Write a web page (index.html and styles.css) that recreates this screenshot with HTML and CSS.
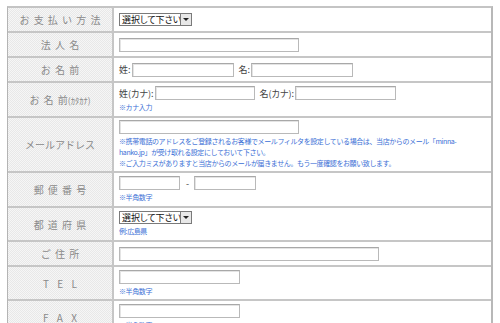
FILE: index.html
```html
<!DOCTYPE html>
<html lang="ja">
<head>
<meta charset="utf-8">
<link rel="stylesheet" href="styles.css">
</head>
<body>
<div class="form">
  <div class="row h25">
    <div class="label">お 支 払 い 方 法</div>
    <div class="value"><span class="select"><span class="sel-text">選択して下さい</span><span class="sel-btn"><span class="tri"></span></span></span></div>
  </div>
  <div class="row h25">
    <div class="label">法 人 名</div>
    <div class="value"><span class="input w180"></span></div>
  </div>
  <div class="row h25">
    <div class="label">お 名 前</div>
    <div class="value"><div class="line"><span class="txt">姓:</span><span class="input w102"></span><span class="txt gap">名:</span><span class="input w102"></span></div></div>
  </div>
  <div class="row h35">
    <div class="label">お 名 前<span class="small">(ｶﾀｶﾅ)</span></div>
    <div class="value"><div class="line"><span class="txt">姓(カナ):</span><span class="input w100"></span><span class="txt gap">名(カナ):</span><span class="input w101"></span></div><div class="note">※カナ入力</div></div>
  </div>
  <div class="row h55">
    <div class="label">メールアドレス</div>
    <div class="value"><span class="input w180"></span><div class="note">※携帯電話のアドレスをご登録されるお客様でメールフィルタを設定している場合は、当店からのメール「minna-<br>hanko.jp」が受け取れる設定にしておいて下さい。<br>※ご入力ミスがありますと当店からのメールが届きません。もう一度確認をお願い致します。</div></div>
  </div>
  <div class="row h35">
    <div class="label">郵 便 番 号</div>
    <div class="value"><div class="line"><span class="input w61"></span><span class="txt dash">-</span><span class="input w62"></span></div><div class="note">※半角数字</div></div>
  </div>
  <div class="row h34">
    <div class="label">都 道 府 県</div>
    <div class="value"><span class="select"><span class="sel-text">選択して下さい</span><span class="sel-btn"><span class="tri"></span></span></span><div class="note">例:広島県</div></div>
  </div>
  <div class="row h25">
    <div class="label">ご 住 所</div>
    <div class="value"><span class="input w260"></span></div>
  </div>
  <div class="row h34">
    <div class="label latin">T E L</div>
    <div class="value"><span class="input w121"></span><div class="note">※半角数字</div></div>
  </div>
  <div class="row h34">
    <div class="label latin">F A X</div>
    <div class="value"><span class="input w121"></span><div class="note">※半角数字</div></div>
  </div>
</div>
</body>
</html>
```
FILE: styles.css
```css
html, body {
  margin: 0;
  padding: 0;
  background: #ffffff;
}
body {
  padding: 6px 0 0 7px;
  font-family: "Noto Sans CJK JP", "Liberation Sans", sans-serif;
  color: #444;
  overflow: hidden;
}
.form {
  width: 486px;
  border-top: 2px solid #c4c4c4;
  border-left: 1px solid #b4b4b4;
  border-right: 2px solid #b8b8b8;
  box-sizing: border-box;
}
.row {
  display: grid;
  grid-template-columns: 106px 1fr;
  border-bottom: 2px solid #c6c6c6;
  box-sizing: border-box;
}
.h25 { height: 25px; }
.h34 { height: 34px; }
.h35 { height: 35px; }
.h55 { height: 55px; }
.label {
  display: flex;
  align-items: center;
  justify-content: center;
  border-right: 2px solid #c6c6c6;
  background-color: #f0f0f0;
  background-image: repeating-conic-gradient(#e8e8e8 0 25%, #f6f6f6 0 50%);
  background-size: 2px 2px;
  color: #8a8a8a;
  font-size: 10px;
  white-space: pre;
  letter-spacing: 0;
  word-spacing: 2px;
}
.label.latin {
  word-spacing: 6px;
  font-size: 10px;
}
.small {
  font-size: 8.5px;
  letter-spacing: 0;
  word-spacing: 0;
}
.value {
  display: flex;
  flex-direction: column;
  justify-content: center;
  align-items: flex-start;
  padding-left: 5px;
  background: #fff;
  font-size: 9px;
  color: #444;
}
.line {
  display: flex;
  align-items: center;
}
.txt {
  font-size: 9px;
  margin-right: 1px;
  font-feature-settings: "palt";
}
.gap { margin-left: 5px; }
.dash { margin: 0 5px 0 6px; }
.input {
  display: block;
  height: 14px;
  box-sizing: border-box;
  border: 1px solid #b9b9b9;
  border-top-color: #a8a8a8;
  background: #fff;
  box-shadow: inset 1px 1px 0 #e4e4e4;
}
.w61 { width: 61px; }
.w62 { width: 62px; }
.w100 { width: 100px; }
.w101 { width: 101px; }
.w102 { width: 102px; }
.w121 { width: 121px; }
.w180 { width: 180px; }
.w260 { width: 260px; }
.select {
  display: flex;
  align-items: stretch;
  height: 13px;
  width: 73px;
  box-sizing: border-box;
  border: 1px solid #7a7a7a;
  background: #fff;
}
.sel-text {
  flex: 1;
  font-size: 9px;
  line-height: 11px;
  color: #111;
  padding-left: 2px;
  font-feature-settings: "palt";
  white-space: nowrap;
  overflow: hidden;
}
.sel-btn {
  width: 11px;
  box-sizing: border-box;
  border-left: 1px solid #7a7a7a;
  background: #e8e8e8;
  display: flex;
  align-items: center;
  justify-content: center;
}
.tri {
  width: 0;
  height: 0;
  border-left: 3px solid transparent;
  border-right: 3px solid transparent;
  border-top: 3px solid #222;
}
.note {
  margin-top: 2px;
  color: #3a6fd6;
  font-size: 7px;
  line-height: 11px;
  letter-spacing: -0.4px;
  white-space: nowrap;
}
```
